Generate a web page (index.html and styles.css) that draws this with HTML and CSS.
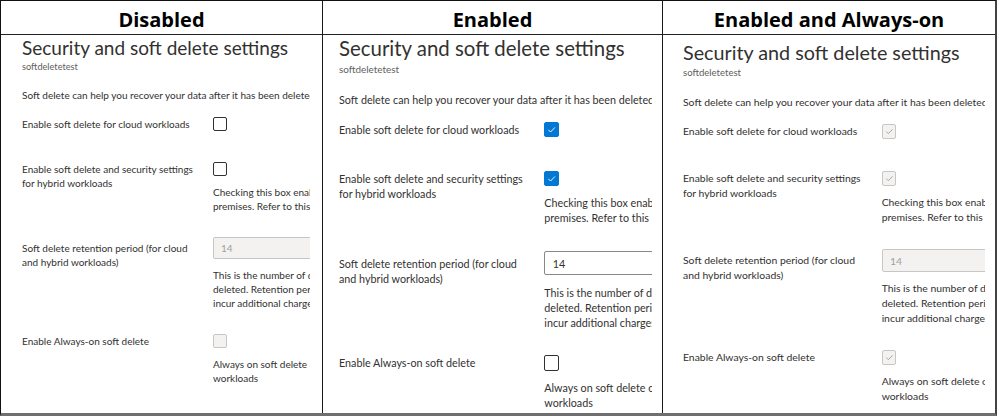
FILE: index.html
```html
<!DOCTYPE html>
<html lang="en">
<head>
  <meta charset="UTF-8" />
  <meta name="viewport" content="width=device-width, initial-scale=1.0" />
  <title>Soft delete states</title>
  <link rel="stylesheet" href="styles.css">
</head>
<body>
  <div class="board">
    <section class="panel panel-off">
      <h2 class="panel-head">Disabled</h2>
      <div class="panel-view">
        <h1 class="blade-title">Security and soft delete settings</h1>
        <div class="blade-sub">softdeletetest</div>
        <p class="blade-intro">Soft delete can help you recover your data after it has been deleted. <a class="link">Learn more</a></p>
        <div class="setting setting-cloud">
          <div class="setting-label">Enable soft delete for cloud workloads</div>
          <div class="setting-control"><span class="check"></span></div>
        </div>
        <div class="setting">
          <div class="setting-label">Enable soft delete and security settings<br>for hybrid workloads</div>
          <div class="setting-control">
            <span class="check"></span>
            <p class="setting-help">Checking this box enables soft delete and security settings for hybrid workloads, including on-<br>premises. Refer to this <a class="link">link</a> for more details.</p>
          </div>
        </div>
        <div class="setting">
          <div class="setting-label setting-label-input">Soft delete retention period (for cloud<br>and hybrid workloads)</div>
          <div class="setting-control">
            <input class="field" type="text" value="14" disabled>
            <p class="setting-help">This is the number of days for which deleted data is retained after it has been<br>deleted. Retention period of more than 14 days may<br>incur additional charges.</p>
          </div>
        </div>
        <div class="setting">
          <div class="setting-label">Enable Always-on soft delete</div>
          <div class="setting-control">
            <span class="check check-disabled"></span>
            <p class="setting-help">Always on soft delete cannot be turned off once enabled for cloud and hybrid<br>workloads</p>
          </div>
        </div>
      </div>
    </section>

    <section class="panel panel-on">
      <h2 class="panel-head">Enabled</h2>
      <div class="panel-view">
        <h1 class="blade-title">Security and soft delete settings</h1>
        <div class="blade-sub">softdeletetest</div>
        <p class="blade-intro">Soft delete can help you recover your data after it has been deleted. <a class="link">Learn more</a></p>
        <div class="setting setting-cloud">
          <div class="setting-label">Enable soft delete for cloud workloads</div>
          <div class="setting-control">
            <span class="check check-on"><svg viewBox="0 0 14 14"><path d="M3.6 7.3 L6 9.7 L10.6 4.8" /></svg></span>
          </div>
        </div>
        <div class="setting">
          <div class="setting-label">Enable soft delete and security settings<br>for hybrid workloads</div>
          <div class="setting-control">
            <span class="check check-on"><svg viewBox="0 0 14 14"><path d="M3.6 7.3 L6 9.7 L10.6 4.8" /></svg></span>
            <p class="setting-help">Checking this box enables soft delete and security settings for hybrid workloads, including on-<br>premises. Refer to this <a class="link">link</a> for more details.</p>
          </div>
        </div>
        <div class="setting">
          <div class="setting-label setting-label-input">Soft delete retention period (for cloud<br>and hybrid workloads)</div>
          <div class="setting-control">
            <input class="field" type="text" value="14">
            <p class="setting-help">This is the number of days for which deleted data is retained after it has been<br>deleted. Retention period of more than 14 days may<br>incur additional charges.</p>
          </div>
        </div>
        <div class="setting">
          <div class="setting-label">Enable Always-on soft delete</div>
          <div class="setting-control">
            <span class="check"></span>
            <p class="setting-help">Always on soft delete cannot be turned off once enabled for cloud and hybrid<br>workloads</p>
          </div>
        </div>
      </div>
    </section>

    <section class="panel panel-locked">
      <h2 class="panel-head">Enabled and Always-on</h2>
      <div class="panel-view">
        <h1 class="blade-title">Security and soft delete settings</h1>
        <div class="blade-sub">softdeletetest</div>
        <p class="blade-intro">Soft delete can help you recover your data after it has been deleted. <a class="link">Learn more</a></p>
        <div class="setting setting-cloud">
          <div class="setting-label">Enable soft delete for cloud workloads</div>
          <div class="setting-control">
            <span class="check check-disabled"><svg viewBox="0 0 14 14"><path d="M3.6 7.3 L6 9.7 L10.6 4.8" /></svg></span>
          </div>
        </div>
        <div class="setting">
          <div class="setting-label">Enable soft delete and security settings<br>for hybrid workloads</div>
          <div class="setting-control">
            <span class="check check-disabled"><svg viewBox="0 0 14 14"><path d="M3.6 7.3 L6 9.7 L10.6 4.8" /></svg></span>
            <p class="setting-help">Checking this box enables soft delete and security settings for hybrid workloads, including on-<br>premises. Refer to this <a class="link">link</a> for more details.</p>
          </div>
        </div>
        <div class="setting">
          <div class="setting-label setting-label-input">Soft delete retention period (for cloud<br>and hybrid workloads)</div>
          <div class="setting-control">
            <input class="field" type="text" value="14" disabled>
            <p class="setting-help">This is the number of days for which deleted data is retained after it has been<br>deleted. Retention period of more than 14 days may<br>incur additional charges.</p>
          </div>
        </div>
        <div class="setting">
          <div class="setting-label">Enable Always-on soft delete</div>
          <div class="setting-control">
            <span class="check check-disabled"><svg viewBox="0 0 14 14"><path d="M3.6 7.3 L6 9.7 L10.6 4.8" /></svg></span>
            <p class="setting-help">Always on soft delete cannot be turned off once enabled for cloud and hybrid<br>workloads</p>
          </div>
        </div>
      </div>
    </section>
  </div>
</body>
</html>
```

FILE: styles.css
```css
body {
  margin: 0;
  background-color: #ffffff;
  font-family: 'Lato', 'Open Sans', sans-serif;
  color: #323130;
}
.board {
  display: flex;
  width: 997px;
  height: 416px;
  box-sizing: border-box;
  border-top: 1px solid #111111;
  border-left: 1px solid #111111;
  border-right: 2px solid #444444;
  border-bottom: 3px solid #6f6f6f;
  overflow: hidden;
}
.panel {
  display: flex;
  flex-direction: column;
  box-sizing: border-box;
  min-width: 0;
  border-right: 1px solid #1a1a1a;
}
.panel-off {
  width: 322px;
  font-size: 10px;
}
.panel-on {
  width: 340px;
  font-size: 10.75px;
}
.panel-locked {
  flex: 1;
  border-right: none;
  font-size: 10.4px;
}
.panel-head {
  margin: 0;
  height: 34px;
  box-sizing: border-box;
  padding-top: 5px;
  border-bottom: 1px solid #222222;
  font-family: 'Open Sans', sans-serif;
  font-size: 20px;
  font-weight: 700;
  line-height: 28px;
  text-align: center;
  color: #000000;
}
.panel-view {
  flex: 1;
  overflow: hidden;
  white-space: nowrap;
}
.panel-off .panel-view {
  padding: 2px 0 0 21px;
  margin-right: 12px;
}
.panel-on .panel-view {
  padding: 1.5px 0 0 16px;
  margin-right: 10px;
}
.panel-locked .panel-view {
  padding: 6.5px 0 0 20px;
  margin-right: 10px;
}
.blade-title {
  margin: 0;
  font-size: 1.9em;
  font-weight: 400;
  line-height: 1.16;
  color: #323130;
}
.blade-sub {
  margin-top: 0.25em;
  font-size: 0.92em;
  line-height: 1.3;
  color: #605e5c;
}
.blade-intro {
  margin: 1.5em 0 0;
  line-height: 1.4;
}
.link {
  color: #0078d4;
}
.setting {
  display: grid;
  grid-template-columns: 19.1em 1fr;
  margin-top: 2.4em;
  line-height: 1.4;
}
.setting-cloud {
  margin-top: 1.45em;
  margin-bottom: 3.1em;
}
.setting-label-input {
  padding-top: 0.4em;
}
.setting-control {
  min-width: 0;
}
.check {
  display: block;
  width: 1.4em;
  height: 1.4em;
  box-sizing: border-box;
  border: 1px solid #323130;
  border-radius: 2px;
  background-color: #ffffff;
}
.check svg {
  display: block;
  width: 100%;
  height: 100%;
  fill: none;
  stroke-width: 1;
}
.check-on {
  border-color: #0078d4;
  background-color: #0078d4;
}
.check-on svg {
  stroke: #ffffff;
}
.check-disabled {
  border-color: #c8c6c4;
  background-color: #f3f2f1;
}
.check-disabled svg {
  stroke: #a19f9d;
}
.field {
  display: block;
  width: 30em;
  height: 2.2em;
  box-sizing: border-box;
  margin: 0;
  padding: 0 0.7em;
  border: 1px solid #8a8886;
  border-radius: 2px;
  background-color: #ffffff;
  font-family: inherit;
  font-size: 1em;
  color: #323130;
}
.field:disabled {
  border-color: #c8c6c4;
  background-color: #f3f2f1;
  color: #a19f9d;
}
.setting-help {
  margin: 0.9em 0 0;
  line-height: 1.4;
}
```
